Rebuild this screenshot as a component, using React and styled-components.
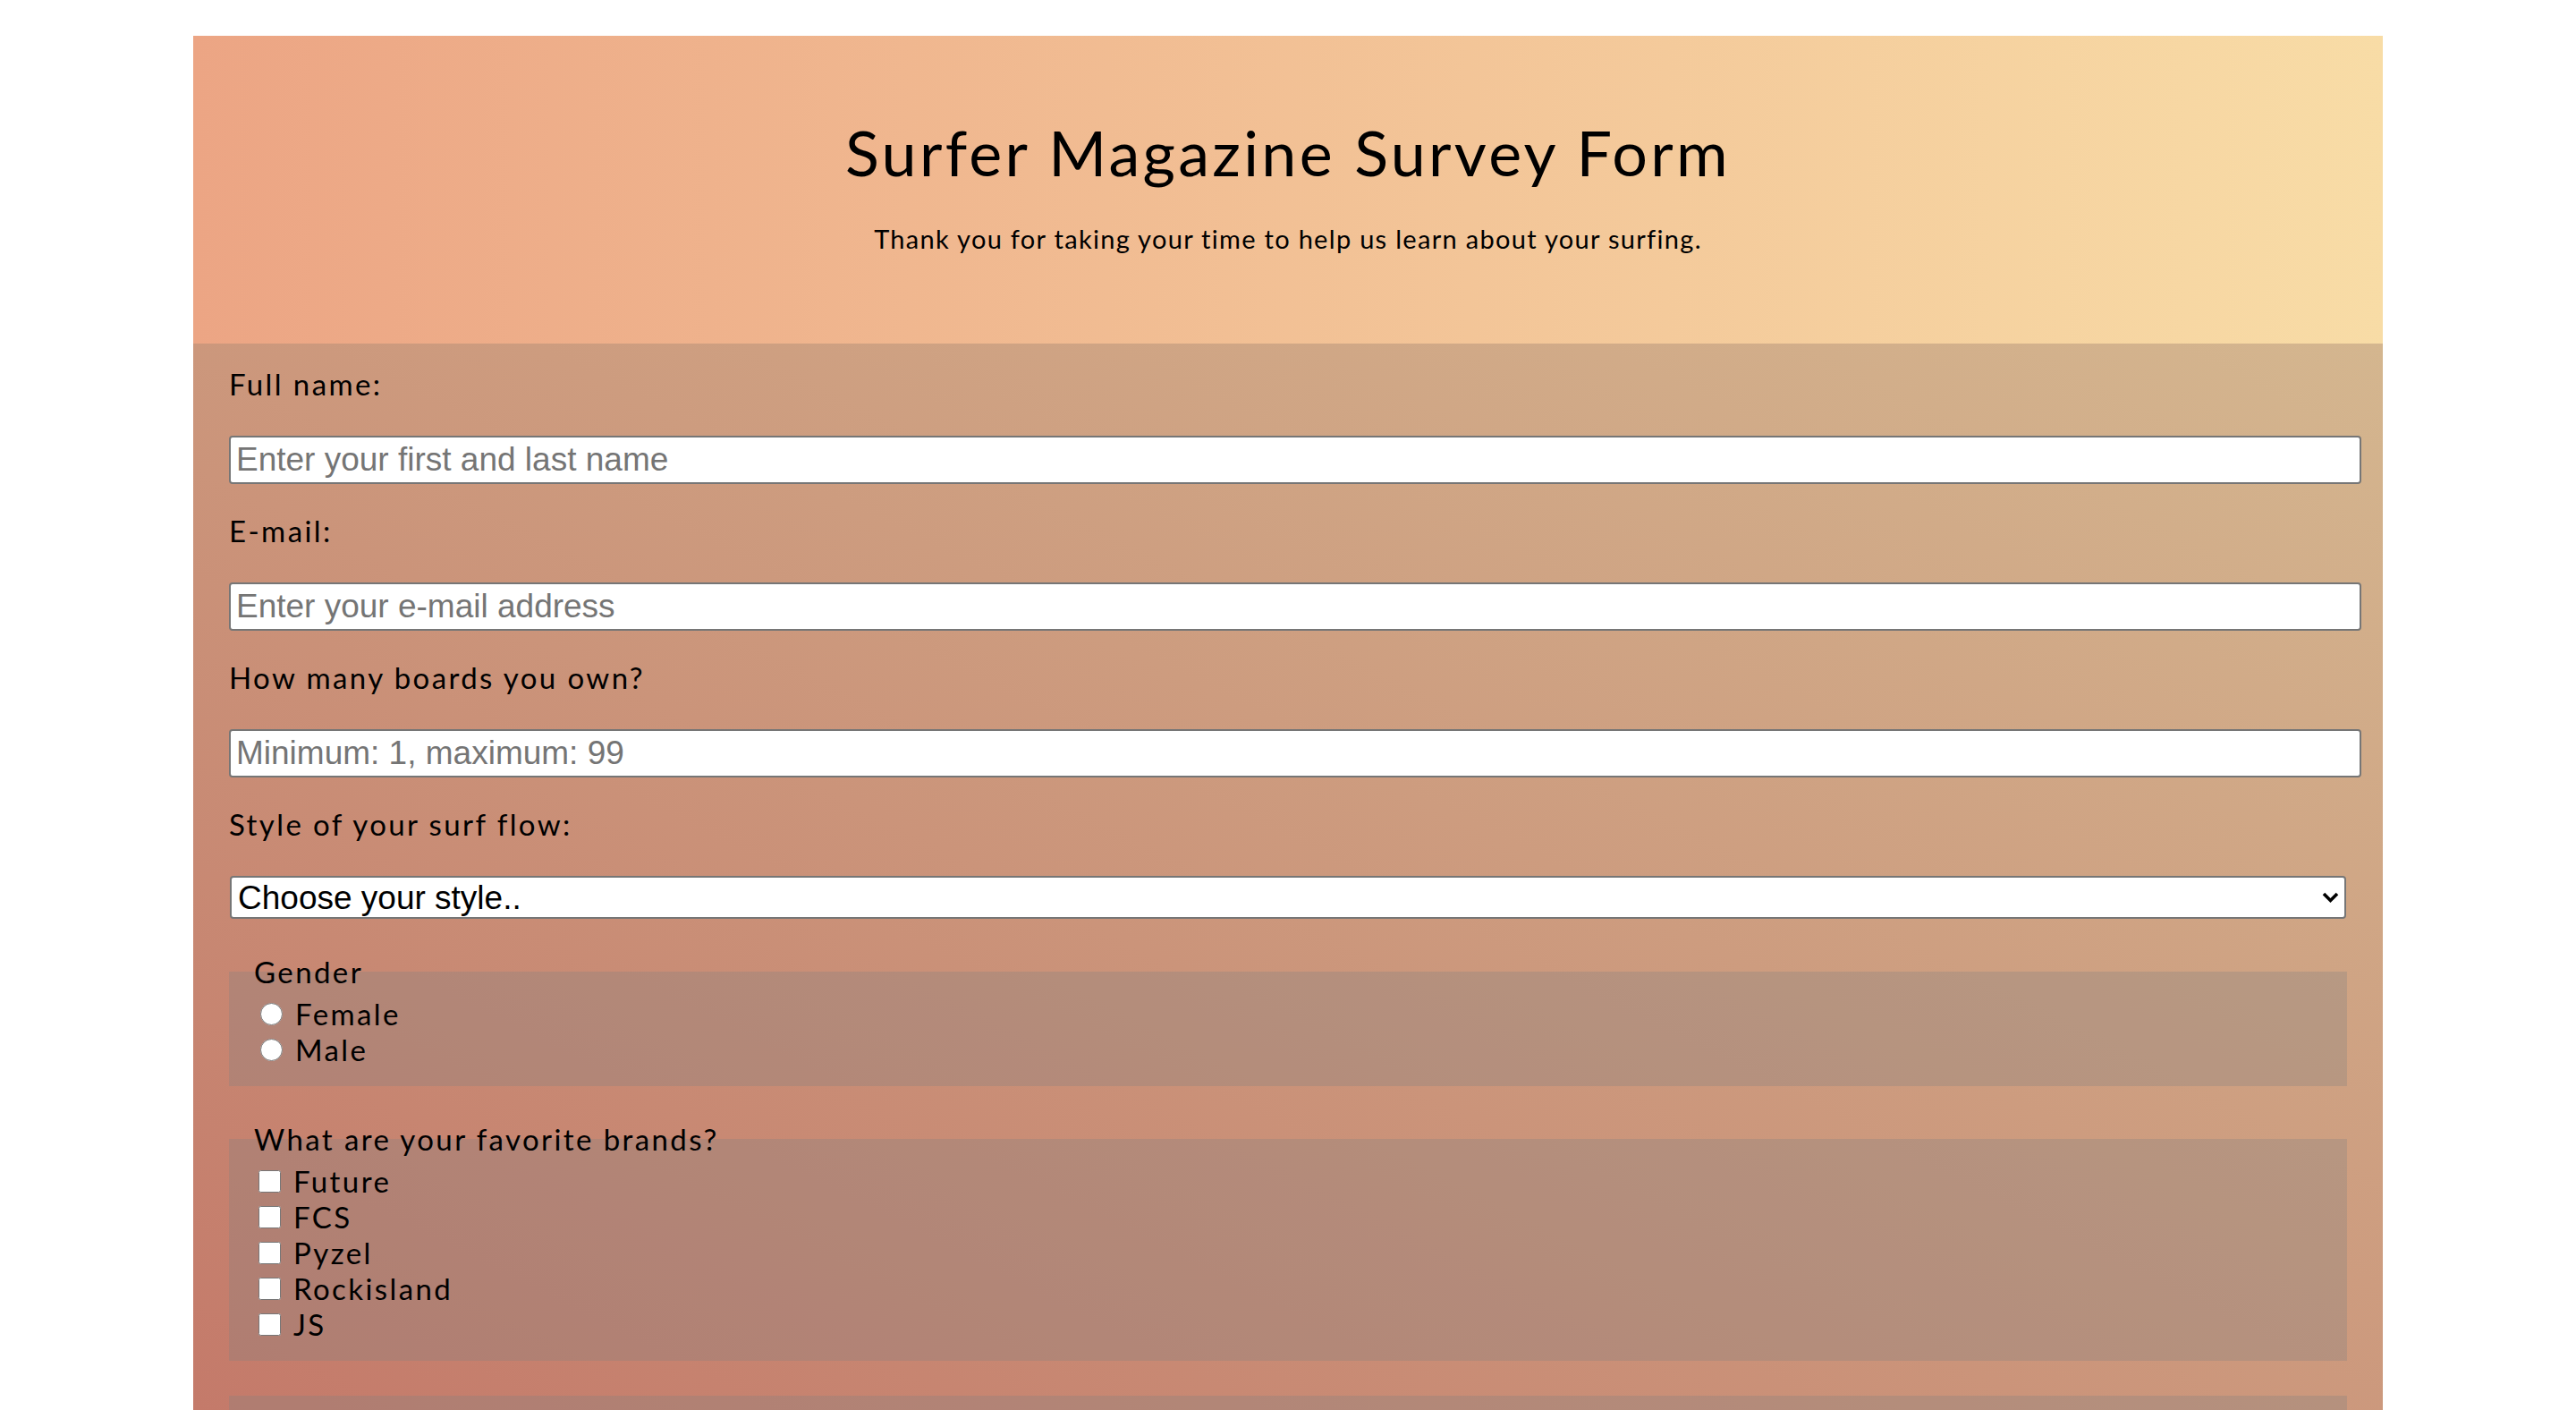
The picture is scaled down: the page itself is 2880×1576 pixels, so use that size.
import React from 'react';
import styled, { createGlobalStyle } from 'styled-components';

const GlobalStyle = createGlobalStyle`
  html, body {
    margin: 0;
    padding: 0;
    background: #ffffff;
  }
  body {
    font-family: Lato, "Noto Sans", sans-serif;
    color: #000;
  }
`;

const Page = styled.div`
  width: 85%;
  margin: 40px auto 0;
`;

const Header = styled.header`
  padding: 88px 0 100px;
  text-align: center;
  background: linear-gradient(to right, #eca584, #f8dca6);
`;

const Title = styled.h1`
  margin: 0;
  font-size: 70px;
  font-weight: 400;
  line-height: 84px;
  letter-spacing: 3.3px;
`;

const Subtitle = styled.p`
  margin: 37px 0 0;
  font-size: 29px;
  line-height: 35px;
  letter-spacing: 1.3px;
`;

const Form = styled.form`
  padding: 25px 40px 80px;
  background:
    linear-gradient(27deg, #c47a6a, #d4b68f) top left / 100% 1192px no-repeat,
    #c47a6a;
`;

const Field = styled.div`
  & + & {
    margin-top: 32px;
  }
`;

const Label = styled.label`
  display: block;
  margin-bottom: 38px;
  font-size: 33px;
  line-height: 40px;
  letter-spacing: 2.4px;
`;

const TextInput = styled.input`
  box-sizing: content-box;
  width: 100%;
  height: 50px;
  padding: 0 6px;
  border: 2px solid #767676;
  border-radius: 4px;
  background: #fff;
  font: 37px "Liberation Sans", Arial, sans-serif;
  color: #000;
  outline: none;

  &::placeholder {
    color: #757575;
  }
`;

const SelectWrap = styled.div`
  position: relative;
`;

const Select = styled.select`
  display: block;
  box-sizing: border-box;
  width: calc(100% - 2px);
  height: 48px;
  margin-left: 1px;
  padding: 0 40px 0 7px;
  border: 2px solid #767676;
  border-radius: 4px;
  background: #fff;
  font: 37px "Liberation Sans", Arial, sans-serif;
  color: #000;
  appearance: none;
  outline: none;
`;

const Chevron = styled.svg`
  position: absolute;
  right: 9px;
  top: 18px;
  pointer-events: none;
`;

const Group = styled.fieldset`
  min-width: 0;
  margin: 39px 0 0;
  padding: ${(p) => (p.$plain ? '36px 24px 40px' : '7px 24px 21px')};
  border: none;
  background: rgba(128, 128, 128, 0.3);
`;

const Legend = styled.legend`
  padding: 0 4px;
  font-size: 33px;
  line-height: 40px;
  letter-spacing: 2.4px;
`;

const Option = styled.label`
  display: flex;
  align-items: center;
  height: 40px;
  font-size: 33px;
  letter-spacing: 2.4px;
`;

const Choice = styled.input`
  width: 25px;
  height: 25px;
  margin: 0 14px 0 ${(p) => (p.type === 'radio' ? '11px' : '9px')};
`;

const Comments = styled.textarea`
  box-sizing: border-box;
  display: block;
  width: 100%;
  height: 200px;
  border: 2px solid #767676;
  border-radius: 4px;
  font: 37px "Liberation Sans", Arial, sans-serif;
`;

const brands = ['Future', 'FCS', 'Pyzel', 'Rockisland', 'JS'];

export default function App() {
  return (
    <>
      <GlobalStyle />
      <Page>
        <Header>
          <Title id="title">Surfer Magazine Survey Form</Title>
          <Subtitle id="description">
            Thank you for taking your time to help us learn about your surfing.
          </Subtitle>
        </Header>
        <Form id="survey-form" onSubmit={(e) => e.preventDefault()}>
          <Field>
            <Label htmlFor="name">Full name:</Label>
            <TextInput id="name" type="text" placeholder="Enter your first and last name" />
          </Field>
          <Field>
            <Label htmlFor="email">E-mail:</Label>
            <TextInput id="email" type="email" placeholder="Enter your e-mail address" />
          </Field>
          <Field>
            <Label htmlFor="number">How many boards you own?</Label>
            <TextInput id="number" type="number" min="1" max="99" placeholder="Minimum: 1, maximum: 99" />
          </Field>
          <Field>
            <Label htmlFor="dropdown">Style of your surf flow:</Label>
            <SelectWrap>
              <Select id="dropdown" defaultValue="">
                <option value="" disabled>Choose your style..</option>
                <option value="goofy">Goofy</option>
                <option value="regular">Regular</option>
              </Select>
              <Chevron width="19" height="13" viewBox="0 0 19 13">
                <path d="M2 2 L9.5 9.5 L17 2" fill="none" stroke="#000" strokeWidth="3.6" />
              </Chevron>
            </SelectWrap>
          </Field>

          <Group>
            <Legend>Gender</Legend>
            <Option>
              <Choice type="radio" name="gender" value="female" />
              Female
            </Option>
            <Option>
              <Choice type="radio" name="gender" value="male" />
              Male
            </Option>
          </Group>

          <Group>
            <Legend>What are your favorite brands?</Legend>
            {brands.map((b) => (
              <Option key={b}>
                <Choice type="checkbox" value={b} />
                {b}
              </Option>
            ))}
          </Group>

          <Group $plain>
            <Comments id="comments" aria-label="Comments" />
          </Group>
        </Form>
      </Page>
    </>
  );
}
